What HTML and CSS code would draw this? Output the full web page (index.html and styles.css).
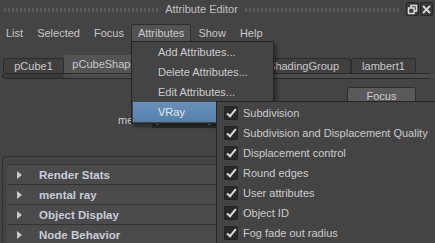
FILE: index.html
```html
<!DOCTYPE html>
<html lang="en">
<head>
    <meta charset="UTF-8">
    <title>Attribute Editor</title>
    <link rel="stylesheet" href="styles.css">
</head>
<body>
    <div class="window">
        <div class="titlebar">
            <div class="grip"></div>
            <span class="title">Attribute Editor</span>
            <div class="grip"></div>
            <div class="win-buttons">
                <span class="win-btn">
                    <svg width="11" height="11" viewBox="0 0 11 11"><rect x="4" y="1.5" width="5.5" height="5.5" fill="none" stroke="#d8d8d8" stroke-width="1.6"/><rect x="1.5" y="4" width="5.5" height="5.5" fill="#3a3a3a" stroke="#d8d8d8" stroke-width="1.6"/></svg>
                </span>
                <span class="win-btn">
                    <svg width="11" height="11" viewBox="0 0 11 11"><path d="M2 2 L9 9 M9 2 L2 9" stroke="#d8d8d8" stroke-width="1.8"/></svg>
                </span>
            </div>
        </div>

        <div class="menubar">
            <span class="menu-item">List</span>
            <span class="menu-item">Selected</span>
            <span class="menu-item">Focus</span>
            <span class="menu-item open">Attributes</span>
            <span class="menu-item">Show</span>
            <span class="menu-item">Help</span>
        </div>

        <div class="tabs">
            <span class="tab tab-cube">pCube1</span>
            <span class="tab tab-shape active">pCubeShape1</span>
            <span class="tab tab-poly">polyCube1</span>
            <span class="tab tab-sg">initialShadingGroup</span>
            <span class="tab tab-lambert">lambert1</span>
        </div>
        <div class="tab-scroll"><div class="tab-scroll-thumb"></div></div>

        <div class="focus-row">
            <button class="focus-btn">Focus</button>
        </div>
        <div class="field-row">
            <label class="field-label">mesh:</label>
            <span class="field">pCubeShape1</span>
        </div>

        <div class="frame">
            <div class="section"><span class="arrow"></span>Render Stats</div>
            <div class="section"><span class="arrow"></span>mental ray</div>
            <div class="section"><span class="arrow"></span>Object Display</div>
            <div class="section"><span class="arrow"></span>Node Behavior</div>
        </div>

        <div class="popup attr-menu">
            <div class="popup-item">Add Attributes...</div>
            <div class="popup-item">Delete Attributes...</div>
            <div class="popup-item">Edit Attributes...</div>
            <div class="popup-item hot">VRay</div>
        </div>

        <div class="popup vray-menu">
            <div class="check-item"><span class="check"></span>Subdivision</div>
            <div class="check-item"><span class="check"></span>Subdivision and Displacement Quality</div>
            <div class="check-item"><span class="check"></span>Displacement control</div>
            <div class="check-item"><span class="check"></span>Round edges</div>
            <div class="check-item"><span class="check"></span>User attributes</div>
            <div class="check-item"><span class="check"></span>Object ID</div>
            <div class="check-item"><span class="check"></span>Fog fade out radius</div>
        </div>
    </div>
</body>
</html>
```

FILE: styles.css
```css
body {
    margin: 0;
    background-color: #444444;
    font-family: "Liberation Sans", Arial, sans-serif;
    font-size: 11px;
    color: #c8c8c8;
    overflow: hidden;
}
.window {
    position: relative;
    width: 435px;
    height: 243px;
    overflow: hidden;
}
.titlebar {
    display: flex;
    align-items: center;
    height: 18px;
    padding: 0 2px 0 3px;
    gap: 4px;
}
.grip {
    flex: 1;
    height: 4px;
    margin-top: 1px;
    background-image: radial-gradient(circle, #5c5c5c 0.8px, transparent 1px);
    background-size: 4px 2px;
}
.title {
    font-size: 11px;
    color: #c0c0c0;
    padding: 0 2px;
}
.win-buttons {
    display: flex;
    gap: 1px;
    margin-left: 2px;
}
.win-btn {
    display: flex;
    align-items: center;
    justify-content: center;
    width: 11px;
    height: 12px;
    border: 1px solid #262626;
    border-radius: 2px;
    background-color: #3a3a3a;
}
.menubar {
    display: flex;
    align-items: center;
    height: 22px;
    margin: 4px 0 0 -1px;
}
.menu-item {
    padding: 2px 6px 3px;
    border: 1px solid transparent;
    color: #c8c8c8;
}
.menu-item.open {
    background-color: #525252;
    border-color: #2e2e2e;
    border-radius: 2px;
}
.tabs {
    display: flex;
    align-items: flex-end;
    height: 19px;
    margin-top: 10px;
    padding-left: 3px;
}
.tab {
    box-sizing: border-box;
    height: 15px;
    border: 1px solid #2c2c2c;
    border-bottom: none;
    border-radius: 3px 3px 0 0;
    background-color: #404040;
    line-height: 14px;
    color: #c8c8c8;
    text-align: center;
}
.tab.active {
    height: 18px;
    line-height: 16px;
    background-color: #545454;
    border-color: #545454;
}
.tab-cube { width: 61px; }
.tab-shape { width: 87px; }
.tab-poly { width: 74px; }
.tab-sg {
    width: 126px;
    padding-left: 6px;
}
.tab-lambert { width: 65px; }
.tab-scroll {
    height: 4px;
    margin: 0 3px 0 2px;
    border: 1px solid #2a2a2a;
    border-radius: 3px;
    background-color: #3a3a3a;
}
.tab-scroll-thumb {
    width: 400px;
    height: 4px;
    margin-left: 60px;
    background-color: #4c4c4c;
    border-radius: 2px;
}
.focus-row {
    display: flex;
    justify-content: flex-end;
    padding: 8px 19px 0 0;
}
.focus-btn {
    width: 69px;
    height: 17px;
    padding: 0;
    border: 1px solid #2e2e2e;
    border-radius: 3px;
    background-color: #5a5a5a;
    font-family: "Liberation Sans", Arial, sans-serif;
    font-size: 11px;
    color: #cccccc;
}
.field-row {
    display: flex;
    align-items: center;
    height: 17px;
    margin-top: 7px;
}
.field-label {
    width: 148px;
    text-align: right;
    padding-right: 4px;
}
.field {
    width: 220px;
    height: 16px;
    padding-left: 4px;
    background-color: #2b2b2b;
    line-height: 14px;
    color: #e0e0e0;
}
.frame {
    margin: 28px 3px 0 2px;
    padding: 7px 0 0 4px;
    border: 1px solid #2f2f2f;
    border-bottom: none;
    border-radius: 4px 4px 0 0;
}
.section {
    display: flex;
    align-items: center;
    height: 19px;
    border-top: 1px solid #333333;
    background-color: #4b4b4b;
    font-weight: bold;
    font-size: 11.5px;
    color: #c8cdd8;
}
.arrow {
    width: 0;
    height: 0;
    margin: 0 17px 0 10px;
    border-top: 4px solid transparent;
    border-bottom: 4px solid transparent;
    border-left: 5px solid #c8c8c8;
}
.popup {
    position: absolute;
    background-color: #444444;
    border: 1px solid #262626;
    box-shadow: 3px 3px 3px rgba(0, 0, 0, 0.35);
}
.attr-menu {
    left: 131px;
    top: 41px;
    width: 140px;
    padding: 0 0 1px 1px;
}
.popup-item {
    height: 20px;
    line-height: 20px;
    padding-left: 25px;
    color: #cccccc;
}
.popup-item.hot {
    background: linear-gradient(#6890ba, #5680ac);
    color: #e8e8e8;
}
.vray-menu {
    left: 216px;
    top: 101px;
    width: 240px;
    height: 160px;
    padding-top: 1px;
}
.check-item {
    display: flex;
    align-items: center;
    height: 20px;
    padding-left: 7px;
    color: #cccccc;
}
.check {
    position: relative;
    width: 12px;
    height: 12px;
    margin-right: 5px;
    background-color: #2a2a2a;
    border: 1px solid #222222;
    border-radius: 1px;
}
.check::after {
    content: "";
    position: absolute;
    left: 4px;
    top: 0px;
    width: 3px;
    height: 8px;
    border: solid #dddddd;
    border-width: 0 2px 2px 0;
    transform: rotate(40deg);
}
```
